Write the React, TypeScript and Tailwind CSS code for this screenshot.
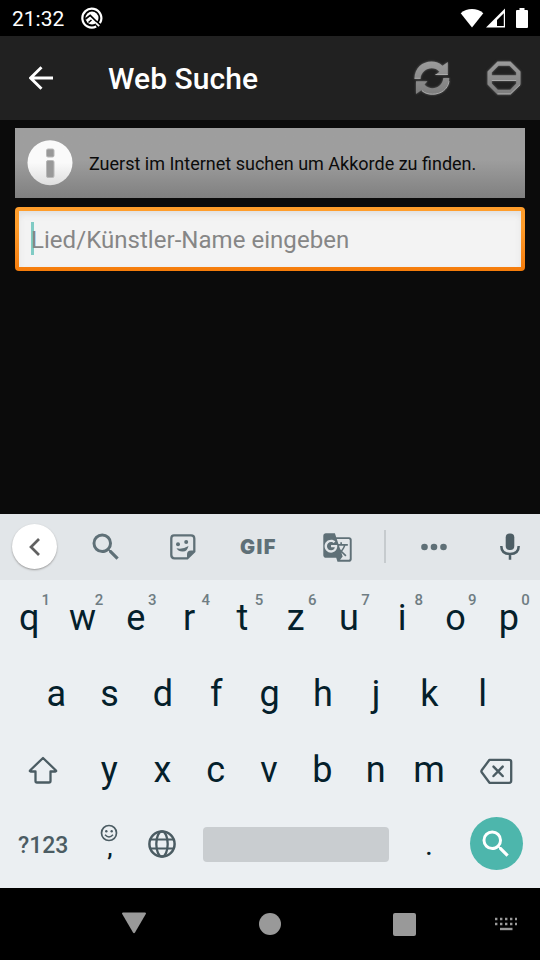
import type { ReactNode } from 'react';
import { MdGTranslate, MdSearch } from 'react-icons/md';

function Icon({ w, h, className = '', children }: { w: number; h: number; className?: string; children: ReactNode }) {
  return (
    <svg width={w} height={h} viewBox={`0 0 ${w} ${h}`} fill="none" className={`block shrink-0 ${className}`}>
      {children}
    </svg>
  );
}

function StatusBar() {
  return (
    <div className="flex h-9 items-center bg-black pl-3 pr-3 text-white">
      <span className="w-[69px] pt-px text-[21px] leading-9">21:32</span>
      <Icon w={22} h={22}>
        <path d="M15.200 19.600A9.500 9.500 0 1 1 18.900 16.200" stroke="white" strokeWidth="2.200" />
        <circle cx="11" cy="11" r="6.500" fill="white" />
        <path d="M4.500 12l4.700-3.700 8.300 8.200" stroke="black" strokeWidth="1.700" />
        <path d="M7.500 15.500l3-2.500" stroke="black" strokeWidth="1.500" />
        <path d="M14.800 15.800l3.400 3.400" stroke="white" strokeWidth="1.800" />
      </Icon>
      <div className="ml-auto flex items-center pb-px">
        <Icon w={24} h={20} className="mr-[2px]">
          <path d="M12 19.500L.7 5.200C4 2.200 7.800 .9 12 .9s8 1.300 11.300 4.300z" fill="white" />
        </Icon>
        <Icon w={19} h={20} className="mr-[11px]">
          <path fillRule="evenodd" d="M19 .5V19.500H0zM17.800 5.200L11 12v6h6.800z" fill="white" />
        </Icon>
        <Icon w={12} h={20}>
          <path d="M3.500 0h5v2H11q1 0 1 1v16q0 1-1 1H1q-1 0-1-1V3q0-1 1-1h2.500z" fill="white" />
        </Icon>
      </div>
    </div>
  );
}

function Header() {
  return (
    <header className="flex h-[84px] items-center bg-[#212121] pl-[29px] pr-[19px] text-white">
      <Icon w={24} h={24} className="mb-px mr-[55px]">
        <path d="M24 12H2.500M12.500 1.300L1.600 12l10.900 10.700" stroke="white" strokeWidth="2.900" />
      </Icon>
      <h1 className="pt-[2px] text-[30px] font-medium leading-9 tracking-[0.05px]">Web Suche</h1>
      <div className="ml-auto flex items-center gap-[37px] drop-shadow-[0_0_1px_#666]">
        <Icon w={36} h={34}>
          <defs>
            <linearGradient id="metal" x1="0" y1="0" x2="0" y2="34" gradientUnits="userSpaceOnUse">
              <stop offset="0" stopColor="#9c9c9c" />
              <stop offset="1" stopColor="#7c7c7c" />
            </linearGradient>
          </defs>
          <path d="M.5 17.500C.5 7 8.500 .5 17.500 .5c4.500 0 7.800 1.300 11 4.300L33.800 1v12.700H21.500l4-3C19.500 4 7.500 7.500 6.500 17.500z" fill="url(#metal)" />
          <path d="M35.300 17C35.300 27 27.500 33.500 18.500 33.500c-4.500 0-8-1.300-11.200-4.300L2 33V20.300h11.500l-3 3.200C16.500 30.500 28.500 27 29.300 17z" fill="url(#metal)" />
          <path d="M.5 17.300h6M21.500 13.500h12.300M8 29.700c3 2.600 6.200 3.500 10.500 3.500 8.500 0 15.500-5 16.500-13" stroke="#aaa" strokeWidth="1" />
        </Icon>
        <Icon w={34} h={34}>
          <path fillRule="evenodd" d="M10.500 .5h13L33.500 10.500v13L23.500 33.500h-13L.5 23.500v-13zM11.500 4.800L4.800 11.500v2.800h24.400v-2.800L22.500 4.800zM4.800 20v2.500l6 6.300h12.400l6-6.300V20z" fill="url(#metal)" />
          <path d="M4.800 19.500h24.400M10.500 32.800h13l9.500-9" stroke="#aaa" strokeWidth="1" />
        </Icon>
      </div>
    </header>
  );
}

function Content() {
  return (
    <main className="flex h-[394px] flex-col gap-[9px] bg-[#0b0b0b] px-[15px] pt-2">
      <div className="flex h-[70px] items-center bg-linear-to-b from-[#9e9e9e] from-45% to-[#808080] pl-3">
        <Icon w={46} h={46} className="mr-4">
          <defs>
            <linearGradient id="disc" x1="0" y1="0" x2="0" y2="1">
              <stop offset="0.5" stopColor="#fafafa" />
              <stop offset="1" stopColor="#dedede" />
            </linearGradient>
          </defs>
          <circle cx="23" cy="22.700" r="22.500" fill="url(#disc)" />
          <rect x="19.500" y="9" width="7.500" height="8" rx="1.500" fill="#999" stroke="#b8b8b8" />
          <rect x="19.500" y="20.500" width="7.500" height="17" rx="1.500" fill="#999" stroke="#b8b8b8" />
        </Icon>
        <p className="pt-[2px] text-[18px] leading-6 text-[#0b0b0b]">Zuerst im Internet suchen um Akkorde zu finden.</p>
      </div>
      <div className="h-16 rounded-[4px] bg-linear-to-b from-[#ff9d2b] from-30% to-[#f57c0a] p-1">
        <div className="relative flex h-14 items-center bg-[#f3f3f3] pl-[12px] shadow-[inset_0_4px_7px_-1px_#dedede]">
          <span className="absolute left-3 top-[11px] h-[33px] w-[3px] bg-[#80cbc4]" />
          <span className="relative pt-[2px] text-[24px] leading-8 tracking-[0.04px] text-[#868686]">Lied/Künstler-Name eingeben</span>
        </div>
      </div>
    </main>
  );
}

function Toolbar() {
  return (
    <div className="flex h-[66px] items-center bg-[#e2e6e9] pl-3 pr-5 text-[#5f7077]">
      <div className="mb-px mr-[31px] flex size-[45px] shrink-0 items-center justify-center rounded-full bg-white shadow-[0_1px_2px_#999]">
        <Icon w={12} h={18}>
          <path d="M10 1L2 9l8 8" stroke="#616161" strokeWidth="2.700" />
        </Icon>
      </div>
      <MdSearch className="mr-[46px] size-9 shrink-0" />
      <Icon w={26} h={26} className="mb-px mr-[44px]">
        <path d="M4 1.300h17q3.300 0 3.300 3.300v12.900l-7 6.800H4.500q-3.200 0-3.200-3.300V4.500q0-3.200 2.700-3.200z" stroke="currentColor" strokeWidth="2.300" />
        <path d="M25 16.500h-4q-4 0-4 4V25z" fill="currentColor" />
        <path d="M6.500 14.300q6 1.400 12-2.300-1.200 5.500-5.500 5.500-4.300.4-6.500-3.200z" fill="currentColor" />
        <circle cx="8" cy="10.200" r="2" fill="currentColor" />
        <circle cx="16.200" cy="7.900" r="2" fill="currentColor" />
      </Icon>
      <span className="mr-[43px] w-[38px] shrink-0 pb-px font-[Inter,sans-serif] text-[20px] font-black leading-6 tracking-[1.400px]">GIF</span>
      <div className="mr-[31px] flex w-8 shrink-0 justify-center">
        <MdGTranslate className="size-[31px] shrink-0" />
      </div>
      <span className="mb-px mr-[35px] h-[33px] w-[2px] shrink-0 bg-[#c6cbce]" />
      <Icon w={26} h={8} className="mb-px">
        <circle cx="3.500" cy="4" r="3.300" fill="currentColor" />
        <circle cx="13" cy="4" r="3.300" fill="currentColor" />
        <circle cx="22.500" cy="4" r="3.300" fill="currentColor" />
      </Icon>
      <Icon w={20} h={27} className="mb-px ml-auto text-[#4d5e65]">
        <rect x="5.700" y=".5" width="8.600" height="16.500" rx="4" fill="currentColor" />
        <path d="M1.300 13q0 8 8.700 8t8.700-8M10 21v5.700" stroke="currentColor" strokeWidth="2.500" />
      </Icon>
    </div>
  );
}

function Key({ label, hint }: { label: string; hint?: string }) {
  return (
    <button className="relative w-[53.3px] text-center text-[36px] leading-[74px]">
      {label}
      {hint && <span className="absolute left-[39px] top-[11px] text-[15px] font-medium leading-[18px] text-[#6f7d83]">{hint}</span>}
    </button>
  );
}

function Keyboard() {
  return (
    <div className="h-[308px] bg-[#ebeff2] text-[#04202b]">
      <div className="flex h-[76px] pl-[2.500px]">
        {[...'qwertzuiop'].map((k, i) => (
          <Key key={k} label={k} hint={String((i + 1) % 10)} />
        ))}
      </div>
      <div className="flex h-[76px] justify-center pr-px">
        {[...'asdfghjkl'].map((k) => (
          <Key key={k} label={k} />
        ))}
      </div>
      <div className="flex h-[76px] items-start pl-7 text-[#4b5c63]">
        <Icon w={30} h={30} className="mr-[24.500px] mt-6">
          <path d="M15 2L2 14.500q-.5 1 .6 1H7.500V25q0 1.500 1.500 1.500h12q1.500 0 1.500-1.500v-9.500h4.900q1.100 0 .6-1z" stroke="currentColor" strokeWidth="2.300" strokeLinejoin="round" />
        </Icon>
        <div className="flex pt-px text-[#04202b]">
          {[...'yxcvbnm'].map((k) => (
            <Key key={k} label={k} />
          ))}
        </div>
        <Icon w={33} h={26} className="ml-[24px] mt-[26px]">
          <path d="M9.500 1.800h19.700q2 0 2 2v19q0 2-2 2H9.500L1.700 14.300q-.7-1 0-2z" stroke="currentColor" strokeWidth="2.300" strokeLinejoin="round" />
          <path d="M13.500 8.600l9.200 9.400M22.700 8.600l-9.200 9.400" stroke="currentColor" strokeWidth="2.500" strokeLinecap="round" />
        </Icon>
      </div>
      <div className="flex h-[72px] items-center pl-[18px] text-[#4b5c63]">
        <span className="w-[82px] pt-[3px] text-[23px] font-medium leading-7">?123</span>
        <div className="mb-[3px] mr-[30px] flex w-[18px] flex-col items-center">
          <Icon w={18} h={18}>
            <circle cx="9" cy="9" r="7.500" stroke="currentColor" strokeWidth="1.700" />
            <circle cx="6.300" cy="7.200" r="1.200" fill="currentColor" />
            <circle cx="11.700" cy="7.200" r="1.200" fill="currentColor" />
            <path d="M5 10.800q4 4.400 8 0" stroke="currentColor" strokeWidth="1.500" />
          </Icon>
          <span className="h-[19px] pl-[2px] text-[24px] font-medium leading-[13px] text-[#04202b]">,</span>
        </div>
        <Icon w={28} h={28} className="mr-[27px]">
          <circle cx="14" cy="14" r="12.600" stroke="currentColor" strokeWidth="2.500" />
          <ellipse cx="14" cy="14" rx="5.700" ry="12.600" stroke="currentColor" strokeWidth="2.300" />
          <path d="M2.300 9.500h23.400M2.300 18.500h23.400" stroke="currentColor" strokeWidth="2.200" />
        </Icon>
        <div className="mr-[35px] h-[35px] w-[186px] rounded-[4px] bg-[#c9cdd0]" />
        <span className="w-[46px] pl-px pt-[2px] text-[30px] leading-9 text-[#04202b]">.</span>
        <div className="mb-px flex size-[53px] items-center justify-center rounded-full bg-[#4db6ac]">
          <MdSearch className="mr-[2px] size-9 text-white" />
        </div>
      </div>
    </div>
  );
}

function NavBar() {
  return (
    <nav className="flex h-[72px] items-center bg-black pl-[121px] text-[#999]">
      <Icon w={26} h={22} className="mb-[3px] mr-[112px]">
        <path d="M2 .5h22q1.600 0 .8 1.500L14 20.500q-1 1.500-2 0L1.200 2Q.4.5 2 .5z" fill="currentColor" />
      </Icon>
      <span className="mr-[111.500px] size-[22px] rounded-full bg-[#999]" />
      <span className="mr-[78.500px] size-[23px] rounded-[2px] bg-[#999]" />
      <Icon w={24} h={16}>
        <path d="M1 3h22M1 8h22" stroke="currentColor" strokeWidth="2.400" strokeDasharray="2.400 2.600" />
        <path d="M6 13h12.500" stroke="currentColor" strokeWidth="2.400" />
      </Icon>
    </nav>
  );
}

export default function App() {
  return (
    <div className="h-[960px] w-[540px] overflow-hidden bg-black font-[Roboto,sans-serif]">
      <StatusBar />
      <Header />
      <Content />
      <Toolbar />
      <Keyboard />
      <NavBar />
    </div>
  );
}
